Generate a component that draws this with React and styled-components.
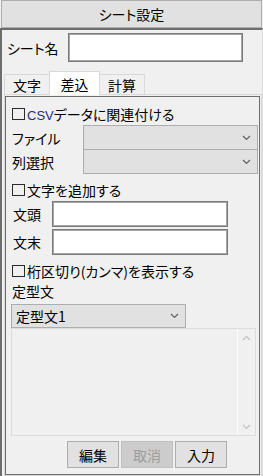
import styled, { createGlobalStyle } from 'styled-components';

const GlobalStyle = createGlobalStyle`
  * { box-sizing: border-box; }
  html, body { margin: 0; padding: 0; background: #f0f0f0; }
  body {
    font-family: "Noto Sans CJK JP", "Noto Sans", sans-serif;
    font-size: 14px;
    font-feature-settings: "palt";
    color: #000;
  }
`;

const Window = styled.div`
  width: 263px;
  height: 476px;
  display: flex;
  flex-direction: column;
  background: #f0f0f0;
  overflow: hidden;
`;

const TitleBar = styled.div`
  height: 28px;
  margin: 0 1px;
  border: 1px solid #adadad;
  background: #e1e1e1;
  display: flex;
  align-items: center;
  justify-content: center;
  line-height: 1;
`;

const Body = styled.div`
  flex: 1;
  min-height: 0;
  display: flex;
  flex-direction: column;
  border-top: 2px solid #6d6d6d;
  border-left: 2px solid #6d6d6d;
  border-right: 1px solid #dcdcdc;
`;

const NameRow = styled.div`
  display: flex;
  align-items: center;
  padding: 3px 0 0 5px;
`;

const NameLabel = styled.span`
  width: 61px;
  line-height: 1;
`;

const TextInput = styled.div`
  width: ${(p) => p.$width}px;
  height: ${(p) => p.$height}px;
  background: #fff;
  border: 1px solid #7a7a7a;
  box-shadow: inset 0 0 0 1px #a6a6a6;
`;

const TabStrip = styled.div`
  display: flex;
  align-items: flex-end;
  height: 23px;
  margin: 9px 0 0 2px;
  position: relative;
  z-index: 1;
`;

const Tab = styled.div`
  width: ${(p) => p.$width}px;
  height: ${(p) => (p.$active ? 24 : 20)}px;
  margin-bottom: ${(p) => (p.$active ? -1 : 0)}px;
  display: flex;
  align-items: center;
  justify-content: center;
  line-height: 1;
  background: ${(p) => (p.$active ? '#ffffff' : '#f0f0f0')};
  border: 1px solid #d9d9d9;
  border-bottom: none;
  ${(p) => p.$noLeft && 'border-left: none;'}
  ${(p) => p.$noRight && 'border-right: none;'}
  padding-top: ${(p) => (p.$active ? 0 : 1)}px;
`;

const Panel = styled.div`
  flex: 1;
  min-height: 0;
  margin-left: 2px;
  border: 1px solid #d9d9d9;
  padding: 1px 1px 0 0;
  display: flex;
`;

const Page = styled.div`
  flex: 1;
  border: 1px solid #6d6d6d;
  padding-left: 6px;
  display: flex;
  flex-direction: column;
`;

const CheckRow = styled.div`
  display: flex;
  align-items: center;
  gap: 2px;
  height: 18px;
  margin-top: ${(p) => p.$top}px;
  line-height: 1;
  white-space: nowrap;
`;

const Box = styled.span`
  width: 13px;
  height: 12px;
  border: 1px solid #2a2a2a;
  flex: none;
`;

const Latin = styled.span`
  color: #1b2f7a;
  font-family: "Liberation Sans", "Noto Sans", sans-serif;
  font-size: 13px;
`;

const FieldGrid = styled.div`
  display: grid;
  grid-template-columns: ${(p) => p.$cols};
  row-gap: ${(p) => p.$gap}px;
  align-items: center;
  margin-top: ${(p) => p.$top}px;
`;

const FieldLabel = styled.span`
  line-height: 1;
  padding-left: ${(p) => p.$indent || 0}px;
`;

const Select = styled.div`
  width: ${(p) => p.$width}px;
  height: ${(p) => p.$height}px;
  margin-left: ${(p) => p.$left || 0}px;
  background: #e1e1e1;
  border: 1px solid #adadad;
  ${(p) => p.$joined && 'border-top: none;'}
  display: flex;
  align-items: center;
  justify-content: space-between;
  padding: 0 6px 0 4px;
  line-height: 1;
`;

const Chevron = ({ up, color = '#606060' }) => (
  <svg width="9" height="6" viewBox="0 0 9 6">
    <polyline
      points={up ? '1,5 4.5,1.5 8,5' : '1,1 4.5,4.5 8,1'}
      fill="none"
      stroke={color}
      strokeWidth="1.2"
    />
  </svg>
);

const Label = styled.div`
  height: 18px;
  margin-top: 2px;
  display: flex;
  align-items: center;
  line-height: 1;
`;

const ListBox = styled.div`
  width: 245px;
  height: 108px;
  margin-left: -1px;
  border: 1px solid #dcdcdc;
  display: flex;
  justify-content: flex-end;
`;

const ScrollBar = styled.div`
  width: 18px;
  border-left: 1px solid #fbfbfb;
  display: flex;
  flex-direction: column;
  justify-content: space-between;
  align-items: center;
  padding: 6px 0 5px;
`;

const ButtonRow = styled.div`
  display: flex;
  gap: 2px;
  margin: 5px 0 0 55px;
`;

const Button = styled.div`
  width: 52px;
  height: 27px;
  display: flex;
  align-items: center;
  justify-content: center;
  line-height: 1;
  background: ${(p) => (p.$disabled ? '#cccccc' : '#e1e1e1')};
  border: 1px solid ${(p) => (p.$disabled ? '#bfbfbf' : '#adadad')};
  color: ${(p) => (p.$disabled ? '#9d9d9d' : '#000')};
`;

export default function App() {
  return (
    <>
      <GlobalStyle />
      <Window>
        <TitleBar>シート設定</TitleBar>
        <Body>
          <NameRow>
            <NameLabel>シート名</NameLabel>
            <TextInput $width={175} $height={29} />
          </NameRow>
          <TabStrip>
            <Tab $width={45} $noRight>文字</Tab>
            <Tab $width={51} $active>差込</Tab>
            <Tab $width={45} $noLeft>計算</Tab>
          </TabStrip>
          <Panel>
            <Page>
              <CheckRow $top={8}>
                <Box />
                <span>
                  <Latin>CSV</Latin>データに関連付ける
                </span>
              </CheckRow>
              <FieldGrid $cols="71px 175px" $gap={0} $top={2}>
                <FieldLabel>ファイル</FieldLabel>
                <Select $width={175} $height={25}>
                  <span />
                  <Chevron />
                </Select>
                <FieldLabel>列選択</FieldLabel>
                <Select $width={175} $height={24} $joined>
                  <span />
                  <Chevron />
                </Select>
              </FieldGrid>
              <CheckRow $top={7}>
                <Box />
                <span>文字を追加する</span>
              </CheckRow>
              <FieldGrid $cols="40px 176px" $gap={2} $top={2}>
                <FieldLabel $indent={1}>文頭</FieldLabel>
                <TextInput $width={176} $height={26} />
                <FieldLabel $indent={1}>文末</FieldLabel>
                <TextInput $width={176} $height={26} />
              </FieldGrid>
              <CheckRow $top={7}>
                <Box />
                <span>桁区切り(カンマ)を表示する</span>
              </CheckRow>
              <Label>定型文</Label>
              <FieldGrid $cols="175px" $gap={0} $top={4}>
                <Select $width={175} $height={24} $left={-1}>
                  <span>定型文1</span>
                  <Chevron />
                </Select>
              </FieldGrid>
              <ListBox>
                <ScrollBar>
                  <Chevron up color="#c2c2c2" />
                  <Chevron color="#c2c2c2" />
                </ScrollBar>
              </ListBox>
              <ButtonRow>
                <Button>編集</Button>
                <Button $disabled>取消</Button>
                <Button>入力</Button>
              </ButtonRow>
            </Page>
          </Panel>
        </Body>
      </Window>
    </>
  );
}
